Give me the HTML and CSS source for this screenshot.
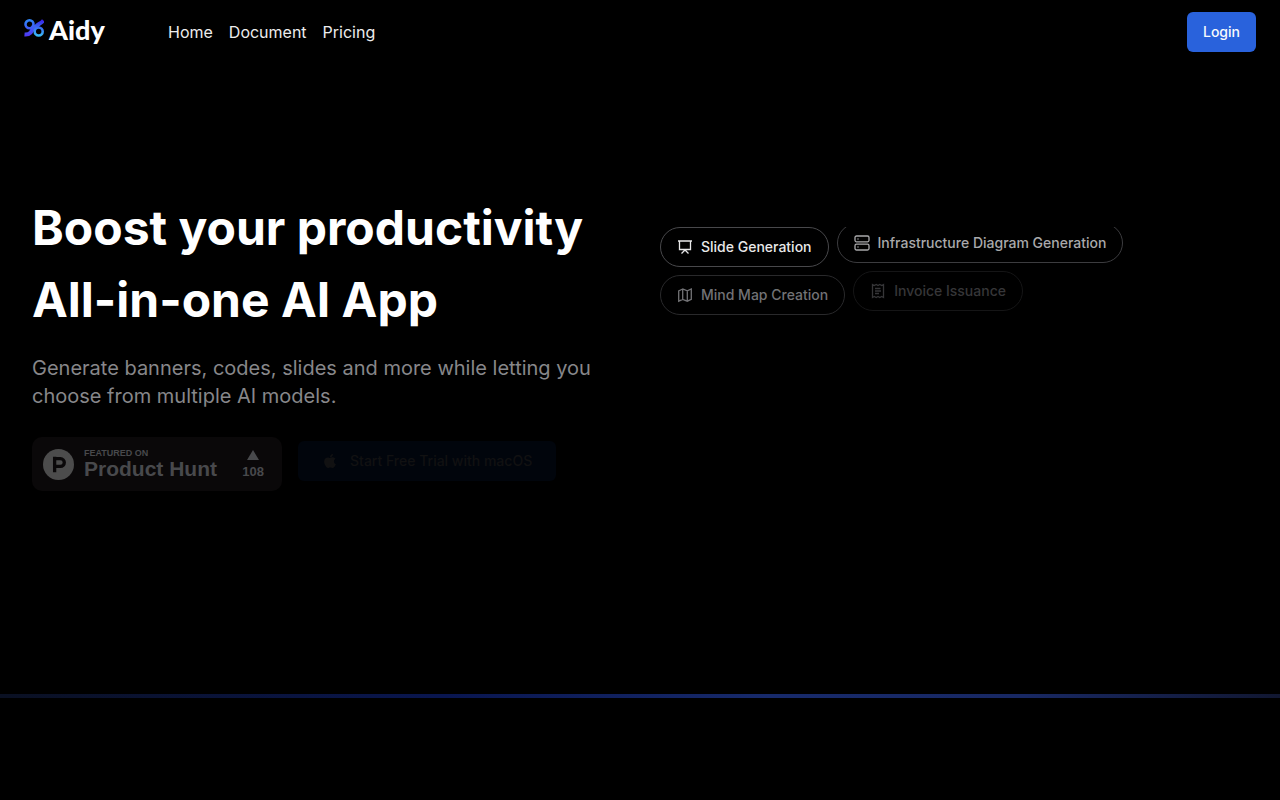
FILE: index.html
```html
<!DOCTYPE html>
<html lang="en">
<head>
  <meta charset="UTF-8">
  <meta name="viewport" content="width=device-width, initial-scale=1.0">
  <title>Aidy</title>
  <link rel="stylesheet" href="styles.css">
</head>
<body>
  <header class="navbar">
    <a href="#" class="logo">
      <svg class="logo-mark" viewBox="0 0 20 18" fill="none" aria-hidden="true">
        <defs>
          <linearGradient id="markLeft" gradientUnits="userSpaceOnUse" x1="3" y1="1" x2="5" y2="17">
            <stop offset="0" stop-color="#2f86f6" />
            <stop offset="1" stop-color="#4f35f2" />
          </linearGradient>
          <linearGradient id="markRight" gradientUnits="userSpaceOnUse" x1="16" y1="1" x2="15" y2="17">
            <stop offset="0" stop-color="#3a22e8" />
            <stop offset="1" stop-color="#38bdf8" />
          </linearGradient>
        </defs>
        <path d="M19.500 1.500C15 6.500 12 4.500 9.800 12" stroke="url(#markRight)" stroke-width="4" />
        <path d="M.5 15.500C6 16 8 13 10 6" stroke="url(#markLeft)" stroke-width="4" />
        <circle cx="5.500" cy="5.300" r="4" stroke="url(#markLeft)" stroke-width="2.600" />
        <circle cx="14.700" cy="12.500" r="4" fill="#000" stroke="url(#markRight)" stroke-width="2.600" />
      </svg>
      <span class="logo-text">Aidy</span>
    </a>
    <nav class="nav-links">
      <a href="#">Home</a>
      <a href="#">Document</a>
      <a href="#">Pricing</a>
    </nav>
    <button type="button" class="login-btn">Login</button>
  </header>

  <main class="hero">
    <div class="hero-text">
      <h1>Boost your productivity<br>All-in-one AI App</h1>
      <p>Generate banners, codes, slides and more while letting you choose from multiple AI models.</p>
      <div class="cta-row">
        <a href="#" class="ph-badge">
          <svg class="ph-icon" viewBox="0 0 32 32" aria-hidden="true">
            <circle cx="16" cy="16" r="16" fill="currentColor" />
            <path d="M12 8v16M12 10h6a4 4 0 0 1 0 8h-6" fill="none" stroke="#0a0809" stroke-width="3.400" />
          </svg>
          <span class="ph-label">
            <small>FEATURED ON</small>
            <strong>Product Hunt</strong>
          </span>
          <span class="ph-votes">
            <svg viewBox="0 0 12 10" aria-hidden="true"><path d="M6 0l6 10H0z" fill="currentColor" /></svg>
            108
          </span>
        </a>
        <button type="button" class="trial-btn">
          <svg viewBox="0 0 384 512" fill="currentColor" aria-hidden="true">
            <path d="M318.700 268.700c-.2-36.700 16.400-64.400 50-84.800-18.800-26.900-47.200-41.700-84.700-44.600-35.500-2.800-74.300 20.700-88.500 20.700-15 0-49.400-19.700-76.400-19.700C63.300 141.200 4 184.800 4 273.500q0 39.300 14.400 81.200c12.800 36.700 59 126.700 107.200 125.200 25.200-.6 43-17.900 75.800-17.900 31.800 0 48.300 17.900 76.400 17.900 48.600-.7 90.400-82.500 102.600-119.300-65.200-30.700-61.700-90-61.700-91.900zm-56.600-164.200c27.300-32.400 24.800-61.900 24-72.500-24.100 1.400-52 16.400-67.900 34.900-17.500 19.800-27.800 44.300-25.600 71.900 26.100 2 49.900-11.400 69.500-34.300z" />
          </svg>
          Start Free Trial with macOS
        </button>
      </div>
    </div>

    <ul class="features">
      <li class="chip chip-1">
        <svg viewBox="0 0 16 16" aria-hidden="true"><path d="M1 2h14M2.500 2v8.500h11V2M8 10.500v1.500M8 11l-3.500 3.500M8 11l3.500 3.500" /></svg>
        Slide Generation
      </li>
      <li class="chip chip-2 raised">
        <svg viewBox="0 0 16 16" aria-hidden="true"><rect x="1" y="1" width="14" height="5.800" rx="1.500" /><rect x="1" y="9.200" width="14" height="5.800" rx="1.500" /><path d="M3.500 4h1M3.500 12h1" /></svg>
        Infrastructure Diagram Generation
      </li>
      <li class="chip chip-3">
        <svg viewBox="0 0 16 16" aria-hidden="true"><path d="M5.700 2L1.700 3.800v10.400l4-1.800 4.600 1.800 4-1.800V2l-4 1.800zM5.700 2v10.400M10.300 3.800v10.400" /></svg>
        Mind Map Creation
      </li>
      <li class="chip chip-4 raised">
        <svg viewBox="0 0 16 16" aria-hidden="true"><path d="M2.500 1.500l1.800 1L6.200 1.500l1.800 1 1.800-1 1.900 1 1.800-1v13l-1.800-1-1.900 1-1.800-1-1.800 1-1.900-1-1.800 1zM5 5.500h5.500M5 8h6M5 10.500h4" /></svg>
        Invoice Issuance
      </li>
    </ul>
  </main>

  <div class="glow-line"></div>
</body>
</html>
```
FILE: styles.css
```css
* {
  box-sizing: border-box;
}
body {
  margin: 0;
  min-height: 100vh;
  background: #000;
  color: #fff;
  font-family: Inter, "Liberation Sans", sans-serif;
}
a {
  color: inherit;
  text-decoration: none;
}

/* Navbar */
.navbar {
  display: flex;
  align-items: center;
  height: 64px;
  padding: 0 24px;
}
.logo {
  display: flex;
  align-items: center;
  gap: 5px;
  width: 144px;
}
.logo-mark {
  width: 20px;
  height: 18px;
  margin-bottom: 8px;
}
.logo-text {
  padding-bottom: 4px;
  font-family: Lato, sans-serif;
  font-size: 27px;
  font-weight: 900;
  line-height: 32px;
}
.nav-links {
  display: flex;
  gap: 16px;
  font-size: 16px;
  line-height: 24px;
  color: #ededed;
}
.login-btn {
  height: 40px;
  margin-left: auto;
  padding: 0 16px 1px;
  border: none;
  border-radius: 6px;
  background: #2962dc;
  color: #f8fafc;
  font-family: inherit;
  font-size: 14px;
  font-weight: 500;
  line-height: 20px;
  cursor: pointer;
}

/* Hero */
.hero {
  display: grid;
  grid-template-columns: 1fr 1fr;
  gap: 40px;
  min-height: 630px;
  padding: 128px 32px 0;
}
h1 {
  margin: 0;
  font-size: 48px;
  font-weight: 700;
  line-height: 72px;
}
.hero-text p {
  margin: 18px 0 0;
  color: #87878a;
  font-size: 20px;
  line-height: 28px;
}
.cta-row {
  display: flex;
  align-items: flex-start;
  gap: 16px;
  margin-top: 27px;
}
.ph-badge {
  display: flex;
  align-items: center;
  width: 250px;
  height: 54px;
  padding: 0 18px 0 11px;
  border-radius: 10px;
  background: #0a0809;
  color: #48494c;
  font-family: "Liberation Sans", Arial, sans-serif;
  font-weight: 700;
}
.ph-icon {
  width: 31px;
  height: 31px;
  color: #4c4c4c;
}
.ph-label {
  display: flex;
  flex-direction: column;
  margin-left: 10px;
}
.ph-label small {
  font-size: 9px;
  line-height: 10px;
}
.ph-label strong {
  font-size: 21px;
  line-height: 22px;
}
.ph-votes {
  display: flex;
  flex-direction: column;
  align-items: center;
  gap: 5px;
  margin-left: auto;
  font-size: 13px;
  line-height: 14px;
}
.ph-votes svg {
  width: 12px;
  height: 10px;
}
.trial-btn {
  display: flex;
  align-items: center;
  gap: 12px;
  height: 40px;
  margin-top: 4px;
  padding: 0 24px 1px;
  border: none;
  border-radius: 6px;
  background: #01050c;
  color: #111112;
  font-family: inherit;
  font-size: 14px;
  font-weight: 500;
  line-height: 20px;
  cursor: pointer;
}
.trial-btn svg {
  width: 16px;
  height: 16px;
}

/* Feature chips */
.features {
  display: flex;
  flex-wrap: wrap;
  align-content: flex-start;
  gap: 8px;
  height: 228px;
  margin: 35px 0 0;
  padding: 0;
  overflow: hidden;
  list-style: none;
}
.chip {
  display: flex;
  align-items: center;
  gap: 8px;
  height: 40px;
  padding: 0 16px;
  border: 1px solid;
  border-radius: 20px;
  font-size: 14px;
  font-weight: 500;
  line-height: 20px;
}
.chip svg {
  width: 16px;
  height: 16px;
  fill: none;
  stroke: currentColor;
  stroke-width: 1.3;
}
.chip-1 {
  color: #e8e8e9;
  border-color: #48484b;
}
.chip-2 {
  color: #a9a9ab;
  border-color: #3c3c3f;
}
.chip-3 {
  color: #727275;
  border-color: #29292b;
}
.chip-4 {
  color: #363638;
  border-color: #151516;
}
.raised {
  transform: translateY(-4px);
}

.glow-line {
  height: 4px;
  background: linear-gradient(90deg, #0a1022, #091650 35%, #172a6b 60%, #182863 80%, #111731);
}
```
